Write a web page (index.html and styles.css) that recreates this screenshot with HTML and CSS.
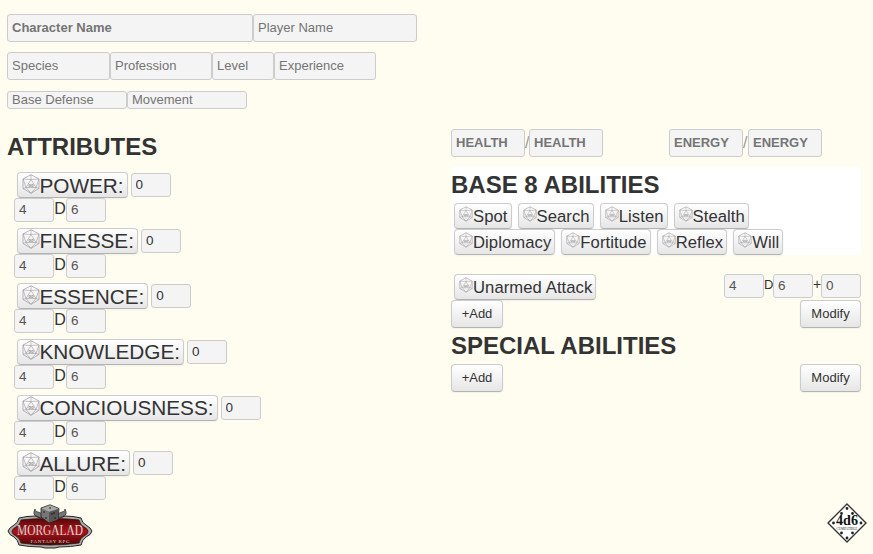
FILE: index.html
```html
<!DOCTYPE html>
<html lang="en">
<head>
<meta charset="utf-8">
<title>Character Sheet</title>
<link rel="stylesheet" href="styles.css">
</head>
<body>
<svg class="defs" width="0" height="0">
  <symbol id="die" viewBox="0 0 18 20">
    <path class="die-rim" d="M9 .7 17 5v9.500L9 19.300 1 14.500V5z"/>
    <path class="die-face" d="M9 5.500 14 13.500H4zM9 .7v4.800M1 5l8 .5L17 5M1 5l3 8.500-3 1M17 5l-3 8.500 3 1M4 13.500l5 5.800 5-5.800"/>
    <path class="die-num" d="M7 10.500h1.500v2H7zM9.700 10.500h1.500v2H9.700z"/>
  </symbol>
</svg>
<main class="sheet">
  <header class="identity">
    <div class="row names"><input class="w246 bold" placeholder="Character Name"><input class="w164" placeholder="Player Name"></div>
    <div class="row traits"><input class="w103" placeholder="Species"><input class="w102" placeholder="Profession"><input class="w62" placeholder="Level"><input class="w102" placeholder="Experience"></div>
    <div class="row stats"><input class="w120" placeholder="Base Defense"><input class="w120" placeholder="Movement"></div>
  </header>
  <div class="columns">
    <section class="attributes">
      <h2>ATTRIBUTES</h2>
      <div class="attribute"><div class="row check"><button class="roll large"><svg><use href="#die"/></svg>POWER:</button><input class="num strong" value="0"></div><div class="row dice"><input class="num" value="4"><span>D</span><input class="num" value="6"></div></div>
      <div class="attribute"><div class="row check"><button class="roll large"><svg><use href="#die"/></svg>FINESSE:</button><input class="num strong" value="0"></div><div class="row dice"><input class="num" value="4"><span>D</span><input class="num" value="6"></div></div>
      <div class="attribute"><div class="row check"><button class="roll large"><svg><use href="#die"/></svg>ESSENCE:</button><input class="num strong" value="0"></div><div class="row dice"><input class="num" value="4"><span>D</span><input class="num" value="6"></div></div>
      <div class="attribute"><div class="row check"><button class="roll large"><svg><use href="#die"/></svg>KNOWLEDGE:</button><input class="num strong" value="0"></div><div class="row dice"><input class="num" value="4"><span>D</span><input class="num" value="6"></div></div>
      <div class="attribute"><div class="row check"><button class="roll large"><svg><use href="#die"/></svg>CONCIOUSNESS:</button><input class="num strong" value="0"></div><div class="row dice"><input class="num" value="4"><span>D</span><input class="num" value="6"></div></div>
      <div class="attribute"><div class="row check"><button class="roll large"><svg><use href="#die"/></svg>ALLURE:</button><input class="num strong" value="0"></div><div class="row dice"><input class="num" value="4"><span>D</span><input class="num" value="6"></div></div>
    </section>
    <section class="abilities">
      <div class="row pools">
        <div class="row pool"><input class="bold" placeholder="HEALTH"><span>/</span><input class="bold" placeholder="HEALTH"></div>
        <div class="row pool energy"><input class="bold" placeholder="ENERGY"><span>/</span><input class="bold" placeholder="ENERGY"></div>
      </div>
      <div class="base">
        <h2>BASE 8 ABILITIES</h2>
        <div class="row skills"><button class="roll"><svg><use href="#die"/></svg>Spot</button><button class="roll"><svg><use href="#die"/></svg>Search</button><button class="roll"><svg><use href="#die"/></svg>Listen</button><button class="roll"><svg><use href="#die"/></svg>Stealth</button></div>
        <div class="row skills"><button class="roll"><svg><use href="#die"/></svg>Diplomacy</button><button class="roll"><svg><use href="#die"/></svg>Fortitude</button><button class="roll"><svg><use href="#die"/></svg>Reflex</button><button class="roll"><svg><use href="#die"/></svg>Will</button></div>
      </div>
      <div class="row attack"><button class="roll"><svg><use href="#die"/></svg>Unarmed Attack</button><div class="row attack-dice"><input class="num" value="4"><span class="d">D</span><input class="num" value="6"><span class="plus">+</span><input class="num" value="0"></div></div>
      <div class="row actions"><button class="btn add">+Add</button><button class="btn modify">Modify</button></div>
      <h2 class="special">SPECIAL ABILITIES</h2>
      <div class="row actions"><button class="btn add">+Add</button><button class="btn modify">Modify</button></div>
    </section>
  </div>
  <footer class="row logos">
    <svg class="morgalad" viewBox="0 0 86 46">
      <defs>
        <linearGradient id="red" x1="0" x2="0" y1="0" y2="1"><stop offset="0" stop-color="#5a0808"/><stop offset=".5" stop-color="#b01218"/><stop offset="1" stop-color="#4a0506"/></linearGradient>
      </defs>
      <path fill="#777" stroke="#333" stroke-width=".8" d="M34 15c-2-4-10-1-6-10 0 4 5 2 8 6zM52 15c2-4 10-1 6-10 0 4-5 2-8 6z"/>
      <path fill="#aaa" stroke="#252525" stroke-width="1" d="M12 14q8-2 16-2l5 2h20l5-2q8 0 16 2 1 5 5 7 5 3 6 6-1 4-6 6-4 3-5 8-10 2-22 2l-4 1H38l-4-1q-12 0-22-2-1-5-5-8-5-2-6-6 1-3 6-6 4-2 5-7z"/>
      <path fill="url(#red)" stroke="#301010" stroke-width=".8" d="M14 16q15-2 29-1 14-1 29 1 1 5 5 7 4 2 4 4.500t-4 4.500q-4 2-5 7-14 2-29 2t-29-2q-1-5-5-7-4-2-4-4.500t4-4.500q4-2 5-7z"/>
      <path fill="#777" stroke="#222" stroke-width=".8" d="M34 4 43 .8l9 3.700-1 11-9 3.500-8-6z"/>
      <path fill="#aaa" d="m34.500 4.300 8.500-3 8.500 3.500-9 3z"/><path fill="#555" d="m42 8 9.500-3-1 10.500-8.500 3z"/>
      <path stroke="#161616" stroke-width="1.600" stroke-linecap="round" d="M43 4h.1M37 8h.1M39 14h.1M45 10h.1M48 14h.1M47 9h.1"/>
      <text class="logo-name" x="43" y="31" text-anchor="middle" textLength="66" lengthAdjust="spacingAndGlyphs">MORGALAD</text>
      <text class="logo-tag" x="43" y="39" text-anchor="middle" textLength="39">FANTASY RPG</text>
    </svg>
    <svg class="fourd6" viewBox="0 0 40 40">
      <path fill="#fff" stroke="#333" stroke-width="1.400" stroke-linejoin="round" d="M20 1 39 20 20 39 1 20z"/>
      <path stroke="#222" stroke-width="2.800" stroke-linecap="round" d="M20 5.500h.01M14.500 10.500h.01M25.500 10.500h.01M6.500 20h.01M34 20h.01M14.500 30h.01M25.500 30h.01M20 35h.01"/>
      <text class="d6-name" x="20" y="22" text-anchor="middle" textLength="22" lengthAdjust="spacingAndGlyphs">4d6</text>
      <text class="d6-tag" x="20" y="26.500" text-anchor="middle" textLength="21">COMPATIBLE</text>
    </svg>
  </footer>
</main>
</body>
</html>
```
FILE: styles.css
```css
* { box-sizing: border-box; }
body { margin: 0; background: #fffdf0; color: #333; font-family: "Liberation Sans", Arial, sans-serif; font-size: 16px; overflow: hidden; }
.defs { display: block; }
.sheet { width: 873px; height: 554px; padding: 14px 6px 0 7px; }
.row { display: flex; align-items: flex-start; }
input { height: 28px; min-width: 0; margin: 0; padding: 0 4px 2px; border: 1px solid #ccc; border-radius: 3px; background: #f4f4f4; color: #555; font: 13px "Liberation Sans", Arial, sans-serif; outline: 0; }
input::placeholder { color: #757575; opacity: 1; }
.bold { font-weight: bold; }
.w246 { width: 246px; }
.w164 { width: 164px; }
.w103 { width: 103px; }
.w102 { width: 102px; }
.w62 { width: 62px; }
.w120 { width: 120px; }
.identity { height: 115px; }
.traits { margin-top: 10px; }
.stats { margin-top: 11px; }
.stats input { height: 18px; padding-bottom: 1px; }
h2 { margin: 0; font-size: 24px; line-height: 36px; white-space: nowrap; }
.columns { display: grid; grid-template-columns: 444px 410px; height: 374px; }
.attributes h2 { height: 43px; }
.attribute { height: 55.67px; }
.check { padding-left: 10px; height: 26px; gap: 3px; }
.check .num { margin-top: 1px; }
.dice { padding-left: 7px; }
.dice span { width: 12px; text-align: center; line-height: 21px; }
.num { width: 40px; height: 24px; font-family: "Liberation Sans", Arial, sans-serif; font-size: 13.5px; padding-bottom: 1px; }
.strong { color: #333; }
button { margin: 0; border: 1px solid #ccc; border-bottom-color: #b3b3b3; border-radius: 4px; background: linear-gradient(#fff, #e6e6e6); color: #333; font-family: inherit; white-space: nowrap; box-shadow: 0 1px 2px rgba(0,0,0,.05); }
.roll { display: flex; align-items: center; height: 26px; padding: 1px 3px 0 4px; font-size: 16.64px; letter-spacing: .08px; line-height: 24px; }
.roll svg { flex: none; width: 14px; height: 16px; margin-bottom: 5px; }
.large { padding: 1px 3px 0 4px; font-size: 20.8px; letter-spacing: -.03px; }
.large svg { width: 18px; height: 20px; margin: 0 -.6px 4px 0; }
.die-rim, .die-face, .die-num { fill: none; stroke: #999; stroke-width: .6; }
.die-rim { stroke: #a3a3b6; stroke-width: .8; }
.die-face { stroke: #a39a9a; }
.die-num { stroke: #888; }
.pools { height: 38px; }
.pool input { width: 74px; }
.pool span { width: 4px; line-height: 27px; color: #999; }
.energy { margin-left: 66px; }
.energy span { width: 5px; }
.base { height: 88px; background: #fff; }
.base h2 { height: 36px; }
.skills { padding-left: 3px; gap: 6px; }
.attack { justify-content: space-between; margin-top: 19px; height: 26px; padding-left: 3px; }
.attack-dice span { line-height: 21px; font-size: 14px; text-align: center; }
.attack-dice .d { width: 9px; font-size: 13px; }
.plus { width: 8px; }
.actions { justify-content: space-between; height: 28px; }
.btn { height: 28px; padding: 0 0 2px; font-size: 13px; }
.add { width: 52px; }
.modify { width: 61px; }
.special { height: 36px; }
.logos { justify-content: space-between; }
.morgalad { width: 86px; height: 46px; margin-top: 1px; }
.fourd6 { width: 40px; height: 40px; }
.logo-name { font: 15px "Liberation Serif", serif; fill: #eee; stroke: #322; stroke-width: .2; }
.logo-tag { font: 5px "Liberation Serif", serif; fill: #ddd; }
.d6-name { font: bold 15px "Liberation Serif", serif; fill: #111; }
.d6-tag { font: 3.500px "Liberation Serif", serif; fill: #333; }
```
